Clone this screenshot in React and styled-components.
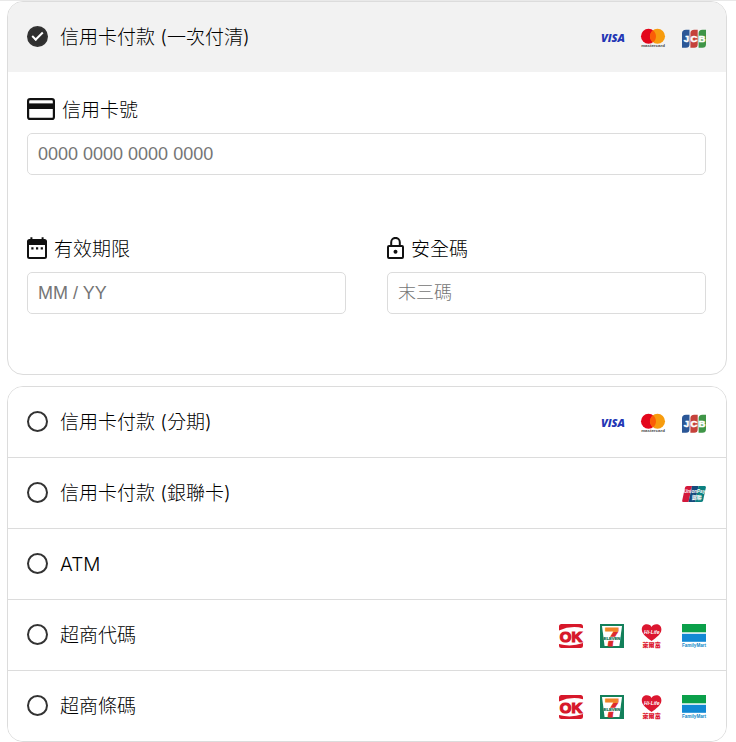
import React, { useState } from "react";
import styled, { createGlobalStyle } from "styled-components";

const GlobalStyle = createGlobalStyle`
  *, *::before, *::after {
    box-sizing: border-box;
  }

  body {
    margin: 0;
    background: #fff;
    color: #000;
    font-family: Inter, "Noto Sans CJK TC", sans-serif;
    font-size: 19px;
    font-weight: 300;
  }
`;

const Page = styled.form`
  display: flex;
  flex-direction: column;
  gap: 11px;
  padding: 0 9px 0 7px;
  border-top: 1px solid #e9e9e9;
`;

const Panel = styled.section`
  border: 1px solid #dcdcdc;
  border-radius: 16px;
  overflow: hidden;
`;

const OptionRow = styled.div`
  display: flex;
  align-items: center;
  justify-content: space-between;
  height: ${({ $active }) => ($active ? "70px" : "71px")};
  padding: 0 20px 0 19px;
  background: ${({ $active }) => ($active ? "#f2f2f2" : "#fff")};
  border-bottom: ${({ $active }) => ($active ? "none" : "1px solid #dcdcdc")};

  &:last-child {
    height: 70px;
    border-bottom: none;
  }
`;

const OptionLabel = styled.label`
  display: flex;
  align-items: center;
  gap: 12px;
  padding-bottom: 2px;
  line-height: 24px;
  cursor: pointer;
`;

const Caption = styled.span`
  padding-top: 3px;
`;

const Radio = styled.input`
  appearance: none;
  display: grid;
  place-items: center;
  width: 21px;
  height: 21px;
  margin: 0;
  border: 2px solid #333;
  border-radius: 50%;
  cursor: pointer;

  &:checked {
    background: #2f2f2f;
  }

  /* tick */
  &:checked::before {
    content: "";
    width: 11px;
    height: 6px;
    margin-bottom: 3px;
    border-left: 2px solid #fff;
    border-bottom: 2px solid #fff;
    transform: rotate(-45deg);
  }
`;

const Logos = styled.div`
  display: flex;
  gap: 17px;
  padding-top: 2px;

  svg {
    display: block;
    width: 24px;
    height: 24px;
    overflow: visible;
  }
`;

const CardForm = styled.div`
  display: grid;
  grid-template-columns: 1fr 1fr;
  gap: 61px 41px;
  padding: 25px 20px 60px 19px;
`;

const Field = styled.div`
  display: flex;
  flex-direction: column;
  gap: 12px;
  min-width: 0;
  grid-column: ${({ $wide }) => ($wide ? "1 / -1" : "auto")};
`;

const FieldLabel = styled.label`
  display: flex;
  align-items: center;
  gap: 7px;
  height: 24px;
  line-height: 24px;
`;

const TextInput = styled.input`
  width: 100%;
  height: 42px;
  padding: 0 10px;
  border: 1px solid #dcdcdc;
  border-radius: 5px;
  background: #fff;
  color: #222;
  font-family: "Liberation Sans", "Noto Sans CJK TC", sans-serif;
  font-size: 18px;
  font-weight: 300;

  &::placeholder {
    color: #757575;
    opacity: 1;
  }
`;

const CardIcon = () => (
  <svg width="28" height="22" viewBox="0 0 28 22" aria-hidden="true">
    <rect x="1.1" y="1.1" width="25.8" height="19.8" rx="2" fill="#fff" stroke="#111" strokeWidth="2.2" />
    <rect x="1" y="5.4" width="26" height="5.6" fill="#111" />
  </svg>
);

const CalendarIcon = () => (
  <svg width="20" height="22" viewBox="0 0 20 22" aria-hidden="true">
    <rect x="1" y="3" width="18" height="18" rx="1.5" fill="#fff" stroke="#111" strokeWidth="2" />
    <path d="M1 3h18v5H1zM3.4 0.2h2v3h-2zM14.6 0.2h2v3h-2z" fill="#111" />
    <path d="M4.3 10.2h2.2v2.2H4.3zM9 10.2h2.2v2.2H9zM13.7 10.2h2.2v2.2h-2.2z" fill="#111" />
  </svg>
);

const LockIcon = () => (
  <svg width="17" height="22" viewBox="0 0 17 22" aria-hidden="true">
    <rect x="1" y="9" width="15" height="12" rx="1" fill="none" stroke="#111" strokeWidth="2" />
    <path d="M4.2 9V5.2a4.3 4.3 0 0 1 8.6 0V9" fill="none" stroke="#111" strokeWidth="2" />
    <circle cx="8.5" cy="14.8" r="2" fill="#111" />
  </svg>
);

const LATIN = "Liberation Sans, sans-serif";
const HAN = "Noto Sans CJK TC, sans-serif";

const Visa = () => (
  <svg viewBox="0 0 24 24" role="img" aria-label="VISA">
    <text x="13" y="16" textAnchor="middle" fontFamily="Open Sans, sans-serif" fontSize="11" fontWeight="800" fontStyle="italic" fill="#2336b5">
      VISA
    </text>
  </svg>
);

const Mastercard = () => (
  <svg viewBox="0 0 24 24" role="img" aria-label="mastercard">
    <circle cx="7.5" cy="10.3" r="7.5" fill="#e3061b" />
    <circle cx="16.5" cy="10.3" r="7.5" fill="#f79c0e" />
    <path d="M12 4.3a7.5 7.5 0 0 1 0 12a7.5 7.5 0 0 1 0-12z" fill="#fb5d07" />
    <text x="12" y="21.4" textAnchor="middle" fontFamily={LATIN} fontSize="4.4" fontWeight="700" fill="#444">
      mastercard
    </text>
  </svg>
);

const Jcb = () => (
  <svg viewBox="0 0 24 24" role="img" aria-label="JCB">
    <path d="M4 3.7h3.5v14.5q0 3.5-3.5 3.5H0V7.2q0-3.5 4-3.5z" fill="#2b5797" />
    <path d="M12.2 3.7h3.5v14.5q0 3.5-3.5 3.5H8.4V7.2q0-3.5 3.8-3.5z" fill="#c5423b" />
    <path d="M20.4 3.7H24v14.5q0 3.5-3.6 3.5h-3.8V7.2q0-3.5 3.8-3.5z" fill="#3f9547" />
    <text y="16" textAnchor="middle" fontFamily={LATIN} fontSize="9.6" fontWeight="700" fill="#fff" stroke="#fff" strokeWidth="0.5">
      <tspan x="4.4">J</tspan>
      <tspan x="12">C</tspan>
      <tspan x="20">B</tspan>
    </text>
  </svg>
);

const UnionPay = () => (
  <svg viewBox="0 0 24 24" role="img" aria-label="UnionPay 銀聯">
    <path d="M5 4h5L6.5 20H1.3Q-0.2 20 0.2 18.4L3 5.6Q3.4 4 5 4z" fill="#d3183b" />
    <path d="M10 4h6.5L13 20H6.5z" fill="#174a7c" />
    <path d="M16.5 4h6.2q1.5 0 1.2 1.6l-2.8 12.8q-.4 1.6-2 1.6H13z" fill="#0b8080" />
    <text x="12.6" y="11" textAnchor="middle" fontFamily={LATIN} fontSize="4.6" fontWeight="700" fontStyle="italic" fill="#fff">
      UnionPay
    </text>
    <text x="14.8" y="17" textAnchor="middle" fontFamily={HAN} fontSize="5" fontWeight="700" fill="#fff">
      銀聯
    </text>
  </svg>
);

const OkMart = () => (
  <svg viewBox="0 0 24 24" role="img" aria-label="OK">
    <path d="M2.5 0H21.5Q24 0 24 2.5V4.2Q12 1.2 0 6.4V2.5Q0 0 2.5 0z" fill="#d7182a" />
    <path d="M2.5 24H21.5Q24 24 24 21.5V19Q12 23.4 0 20V21.5Q0 24 2.5 24z" fill="#d7182a" />
    <text x="12" y="17.6" textAnchor="middle" fontFamily={LATIN} fontSize="15" fontWeight="700" fill="#d7182a" stroke="#d7182a" strokeWidth="1.2">
      OK
    </text>
  </svg>
);

const SevenEleven = () => (
  <svg viewBox="0 0 24 24" role="img" aria-label="7-ELEVEN">
    <defs>
      <linearGradient id="seven" gradientUnits="userSpaceOnUse" x1="0" y1="0" x2="0" y2="24">
        <stop offset="0.32" stopColor="#f08328" />
        <stop offset="0.32" stopColor="#dc2b2b" />
        <stop offset="1" stopColor="#dc2b2b" />
      </linearGradient>
    </defs>
    <rect width="24" height="24" fill="#13805a" />
    <path d="M2 2h20L19.4 22H4.6z" fill="#fff" />
    <text x="12" y="22" textAnchor="middle" fontFamily={LATIN} fontSize="26" fontWeight="700" fill="url(#seven)" stroke="url(#seven)" strokeWidth="1.2">
      7
    </text>
    <rect x="4" y="12.8" width="16" height="4" fill="#fff" />
    <text x="12" y="16.3" textAnchor="middle" fontFamily={LATIN} fontSize="4.2" fontWeight="700" fill="#13704f" stroke="#13704f" strokeWidth="0.2">
      ELEVEN
    </text>
  </svg>
);

const HiLife = () => (
  <svg viewBox="0 0 24 24" role="img" aria-label="Hi-Life 萊爾富">
    <path d="M10.6 17C6 13.4 0.8 10.2 0.8 5.4C0.8 2.2 3.2 0.3 5.8 0.3C8 0.3 9.8 1.3 10.6 3.1C11.4 1.3 13.2 0.3 15.4 0.3C18 0.3 20.4 2.2 20.4 5.4C20.4 10.2 15.2 13.4 10.6 17z" fill="#dc1730" />
    <text x="10.8" y="9.6" textAnchor="middle" fontFamily={LATIN} fontSize="5" fontWeight="700" fontStyle="italic" fill="#fff">
      Hi-Life
    </text>
    <text x="10.6" y="23.2" textAnchor="middle" fontFamily={HAN} fontSize="6.1" fontWeight="900" fill="#dc1730">
      萊爾富
    </text>
  </svg>
);

const FamilyMart = () => (
  <svg viewBox="0 0 24 24" role="img" aria-label="FamilyMart">
    <rect width="24" height="8.3" fill="#0ba04a" />
    <rect y="9.8" width="24" height="8" fill="#1289d4" />
    <text x="12" y="23.2" textAnchor="middle" fontFamily={LATIN} fontSize="4.6" fontWeight="700" fill="#1289c8">
      FamilyMart
    </text>
  </svg>
);

const cards = [Visa, Mastercard, Jcb];
const stores = [OkMart, SevenEleven, HiLife, FamilyMart];

const otherMethods = [
  { id: "installment", title: "信用卡付款 (分期)", logos: cards },
  { id: "unionpay", title: "信用卡付款 (銀聯卡)", logos: [UnionPay] },
  { id: "atm", title: "ATM", logos: [] },
  { id: "cvs-code", title: "超商代碼", logos: stores },
  { id: "cvs-barcode", title: "超商條碼", logos: stores },
];

function PaymentOption({ id, title, logos, selected, onSelect, active }) {
  return (
    <OptionRow $active={active}>
      <OptionLabel htmlFor={id}>
        <Radio
          type="radio"
          name="payment"
          id={id}
          checked={selected === id}
          onChange={() => onSelect(id)}
        />
        <Caption>{title}</Caption>
      </OptionLabel>
      <Logos>
        {logos.map((Logo, i) => (
          <Logo key={i} />
        ))}
      </Logos>
    </OptionRow>
  );
}

export default function App() {
  const [selected, setSelected] = useState("credit");

  return (
    <>
      <GlobalStyle />
      <Page>
        <Panel>
          <PaymentOption
            id="credit"
            title="信用卡付款 (一次付清)"
            logos={cards}
            selected={selected}
            onSelect={setSelected}
            active
          />
          <CardForm>
            <Field $wide>
              <FieldLabel htmlFor="card-number">
                <CardIcon />
                <Caption>信用卡號</Caption>
              </FieldLabel>
              <TextInput id="card-number" inputMode="numeric" placeholder="0000 0000 0000 0000" />
            </Field>
            <Field>
              <FieldLabel htmlFor="expiry">
                <CalendarIcon />
                <Caption>有效期限</Caption>
              </FieldLabel>
              <TextInput id="expiry" placeholder="MM / YY" />
            </Field>
            <Field>
              <FieldLabel htmlFor="cvc">
                <LockIcon />
                <Caption>安全碼</Caption>
              </FieldLabel>
              <TextInput id="cvc" inputMode="numeric" placeholder="末三碼" />
            </Field>
          </CardForm>
        </Panel>

        <Panel>
          {otherMethods.map((method) => (
            <PaymentOption
              key={method.id}
              {...method}
              selected={selected}
              onSelect={setSelected}
            />
          ))}
        </Panel>
      </Page>
    </>
  );
}
